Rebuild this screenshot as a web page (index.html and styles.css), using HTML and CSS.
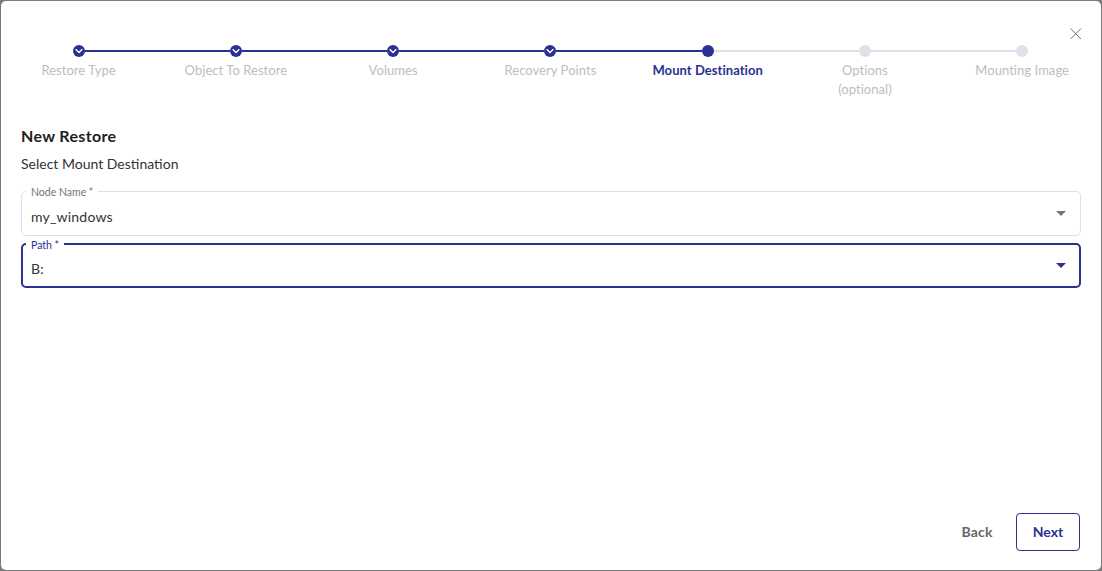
FILE: index.html
```html
<!DOCTYPE html>
<html lang="en">
<head>
<meta charset="utf-8">
<title>New Restore</title>
<link rel="stylesheet" href="styles.css">
</head>
<body>
<main class="dialog">
  <button class="close" aria-label="Close">
    <svg width="12" height="12" viewBox="0 0 12 12"><path d="M.5 .5l10.5 10.5M11 .5L.5 11" stroke="#757575" stroke-width="1" fill="none"/></svg>
  </button>
  <ol class="stepper">
    <li class="step done"><span class="dot"><svg width="8" height="6" viewBox="0 0 8 6"><path d="M.7 1.2L4 4.4 7.3 1.2" stroke="#fff" stroke-width="1.4" fill="none"/></svg></span><span class="label">Restore Type</span></li>
    <li class="step done"><span class="dot"><svg width="8" height="6" viewBox="0 0 8 6"><path d="M.7 1.2L4 4.4 7.3 1.2" stroke="#fff" stroke-width="1.4" fill="none"/></svg></span><span class="label">Object To Restore</span></li>
    <li class="step done"><span class="dot"><svg width="8" height="6" viewBox="0 0 8 6"><path d="M.7 1.2L4 4.4 7.3 1.2" stroke="#fff" stroke-width="1.4" fill="none"/></svg></span><span class="label">Volumes</span></li>
    <li class="step done"><span class="dot"><svg width="8" height="6" viewBox="0 0 8 6"><path d="M.7 1.2L4 4.4 7.3 1.2" stroke="#fff" stroke-width="1.4" fill="none"/></svg></span><span class="label">Recovery Points</span></li>
    <li class="step current"><span class="dot"></span><span class="label">Mount Destination</span></li>
    <li class="step"><span class="dot"></span><span class="label">Options<br>(optional)</span></li>
    <li class="step"><span class="dot"></span><span class="label">Mounting Image</span></li>
  </ol>
  <section class="content">
    <h1 class="title">New Restore</h1>
    <p class="subtitle">Select Mount Destination</p>
    <fieldset class="field">
      <legend class="legend">Node Name *</legend>
      <span class="value">my_windows</span>
      <span class="arrow"></span>
    </fieldset>
    <fieldset class="field focused">
      <legend class="legend">Path *</legend>
      <span class="value">B:</span>
      <span class="arrow"></span>
    </fieldset>
  </section>
  <footer class="actions">
    <button class="btn back">Back</button>
    <button class="btn next">Next</button>
  </footer>
</main>
</body>
</html>
```
FILE: styles.css
```css
* { box-sizing: border-box; }
html, body { height: 100%; }
body {
  margin: 0;
  padding: 1px;
  background: #7a7a7a;
  font-family: "Lato", "Noto Sans", sans-serif;
  overflow: hidden;
}
.dialog {
  position: relative;
  height: 100%;
  background: #fff;
  border-radius: 5px;
  display: flex;
  flex-direction: column;
}
.close {
  position: absolute;
  top: 27px;
  right: 19px;
  width: 12px;
  height: 12px;
  padding: 0;
  border: 0;
  background: none;
  display: flex;
}
.stepper {
  list-style: none;
  margin: 0 .2px 0 -1px;
  padding: 44px 0 0;
  display: grid;
  grid-template-columns: repeat(7, 1fr);
}
.step {
  position: relative;
  display: flex;
  flex-direction: column;
  align-items: center;
  height: 78px;
}
.step::before {
  content: "";
  position: absolute;
  top: 5px;
  right: calc(50% + 6px);
  width: calc(100% - 12px);
  height: 2px;
  background: #dfe1e8;
}
.step:first-child::before { display: none; }
.done::before, .current::before { background: #2a3192; }
.dot {
  position: relative;
  width: 12px;
  height: 12px;
  border-radius: 50%;
  background: #dfe1e8;
  display: flex;
  align-items: center;
  justify-content: center;
}
.done .dot, .current .dot { background: #2a3192; }
.label {
  margin-top: 4px;
  font-size: 13px;
  line-height: 19px;
  letter-spacing: .05px;
  color: #bdbdbd;
  text-align: center;
}
.current .label { color: #2a3192; font-weight: 700; }
.content {
  flex: 1;
  padding: 0 20px;
}
.title {
  margin: 3px 0 0;
  font-size: 16px;
  line-height: 20px;
  font-weight: 700;
  letter-spacing: .35px;
  color: #212121;
}
.subtitle {
  margin: 8px 0 0;
  font-size: 14px;
  line-height: 19px;
  color: #333;
}
.field {
  position: relative;
  margin: 11px 0 0;
  padding: 0 9px;
  height: 52px;
  border: 1px solid #e0e0e0;
  border-radius: 5px;
  display: flex;
  align-items: center;
}
.field + .field { margin-top: 1px; height: 51px; }
.legend {
  padding: 2px 5px 0;
  margin-left: -5px;
  font-size: 10.5px;
  line-height: 12px;
  color: #757575;
}
.value {
  font-size: 14px;
  line-height: 20px;
  letter-spacing: .2px;
  color: #333;
}
.arrow {
  margin-left: auto;
  margin-right: 5px;
  margin-bottom: 6px;
  border-left: 5px solid transparent;
  border-right: 5px solid transparent;
  border-top: 5px solid #757575;
}
.focused { border: 2px solid #2a3192; padding: 0 8px; }
.focused .legend { color: #2a3192; }
.focused .arrow { border-top-color: #2a3192; margin-right: 5px; }
.actions {
  display: flex;
  justify-content: flex-end;
  align-items: center;
  gap: 11px;
  padding: 0 21px 19px 0;
}
.btn {
  font-family: inherit;
  font-size: 14px;
  font-weight: 700;
  height: 38px;
  padding: 0 0 2px;
  border-radius: 4px;
  background: #fff;
  border: 1px solid transparent;
  cursor: pointer;
}
.back { width: 56px; color: #666; letter-spacing: .2px; }
.next { width: 64px; color: #2a3192; border-color: #2a3192; }
```
